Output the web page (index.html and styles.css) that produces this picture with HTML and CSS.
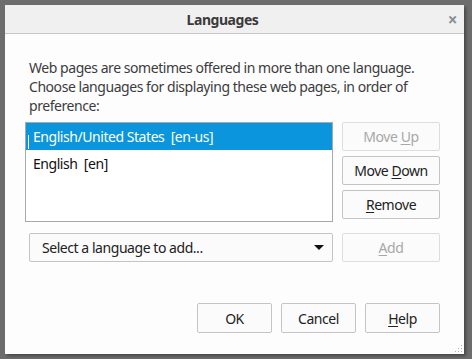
FILE: index.html
```html
<!DOCTYPE html>
<html>
<head>
<meta charset="utf-8">
<link rel="stylesheet" href="styles.css">
</head>
<body>
<div class="dialog">
  <div class="titlebar">
    <div class="title">Languages</div>
    <div class="close">×</div>
  </div>
  <div class="content">
    <p class="desc">Web pages are sometimes offered in more than one language.<br>Choose languages for displaying these web pages, in order of<br>preference:</p>
    <div class="listrow">
      <div class="listbox">
        <div class="item selected"><span class="caret"></span>English/United States&nbsp;&nbsp;[en-us]</div>
        <div class="item">English&nbsp;&nbsp;[en]</div>
      </div>
      <div class="sidebtns">
        <div class="btn disabled"><span>Move <u>U</u>p</span></div>
        <div class="btn"><span>Move <u>D</u>own</span></div>
        <div class="btn"><span><u>R</u>emove</span></div>
      </div>
    </div>
    <div class="addrow">
      <div class="select"><span>Select a language to add...</span><span class="arrow"></span></div>
      <div class="btn disabled"><span><u>A</u>dd</span></div>
    </div>
    <div class="footer">
      <div class="btn"><span>OK</span></div>
      <div class="btn"><span>Cancel</span></div>
      <div class="btn"><span><u>H</u>elp</span></div>
    </div>
  </div>
  <div class="grip"></div>
</div>
</body>
</html>
```
FILE: styles.css
```css
html, body {
  margin: 0;
  padding: 0;
}
body {
  width: 472px;
  height: 359px;
  background: #6d6d6d;
  font-family: "Noto Sans", "Open Sans", sans-serif;
  font-size: 14px;
  letter-spacing: -0.45px;
  color: #222;
  padding: 5px 0 0 5px;
  box-sizing: border-box;
  overflow: hidden;
}
.dialog {
  position: relative;
  width: 459px;
  height: 349px;
  background: #fdfdfd;
  box-shadow: 2px 2px 3px rgba(0,0,0,0.35);
  display: flex;
  flex-direction: column;
}
.titlebar {
  height: 28px;
  background: #f0f0f0;
  border-bottom: 1px solid #c7c7c7;
  display: flex;
  align-items: center;
  position: relative;
}
.title {
  flex: 1;
  text-align: center;
  font-weight: bold;
  font-size: 14px;
  color: #3a3a3a;
  padding-right: 24px;
}
.close {
  position: absolute;
  right: 7px;
  top: 3px;
  font-size: 17px;
  font-weight: bold;
  color: #8a8f96;
}
.content {
  flex: 1;
  padding: 0 24px 0 20px;
  display: flex;
  flex-direction: column;
}
.desc {
  margin: 24px 0 7px 4px;
  line-height: 19px;
  color: #3c3c3c;
}
.listrow {
  display: flex;
  gap: 9px;
}
.listbox {
  width: 308px;
  height: 100px;
  box-sizing: border-box;
  border: 1px solid #a8a8a8;
  background: #fff;
}
.item {
  height: 27px;
  line-height: 27px;
  padding-left: 7px;
  color: #111;
  position: relative;
}
.item.selected {
  background: #0a95dc;
  color: #fff;
}
.caret {
  position: absolute;
  left: 2px;
  top: 12px;
  width: 1px;
  height: 14px;
  background: #fff;
}
.sidebtns {
  display: flex;
  flex-direction: column;
  gap: 5px;
}
.btn {
  width: 98px;
  height: 29px;
  box-sizing: border-box;
  border: 1px solid #c4c4c4;
  border-radius: 2px;
  background: #fbfbfb;
  display: flex;
  align-items: center;
  justify-content: center;
  color: #222;
}
.btn.disabled {
  color: #a8a8a8;
  border-color: #dedede;
}
.btn u {
  text-underline-offset: 2px;
}
.addrow {
  display: flex;
  gap: 9px;
  margin-top: 11px;
  padding-left: 4px;
}
.select {
  width: 304px;
  height: 29px;
  box-sizing: border-box;
  border: 1px solid #c4c4c4;
  border-radius: 2px;
  background: #fbfbfb;
  display: flex;
  align-items: center;
  justify-content: space-between;
  padding: 0 8px 0 12px;
  color: #222;
}
.arrow {
  width: 0;
  height: 0;
  border-left: 5px solid transparent;
  border-right: 5px solid transparent;
  border-top: 5px solid #111;
}
.footer {
  display: flex;
  justify-content: flex-end;
  gap: 9px;
  margin-top: 41px;
}
.footer .btn {
  width: 75px;
  height: 30px;
}
.grip {
  position: absolute;
  right: 2px;
  bottom: 2px;
  width: 8px;
  height: 8px;
  background-image: radial-gradient(circle, #b0b0b0 0.8px, transparent 1px);
  background-size: 3px 3px;
  clip-path: polygon(100% 0, 100% 100%, 0 100%);
}
```
